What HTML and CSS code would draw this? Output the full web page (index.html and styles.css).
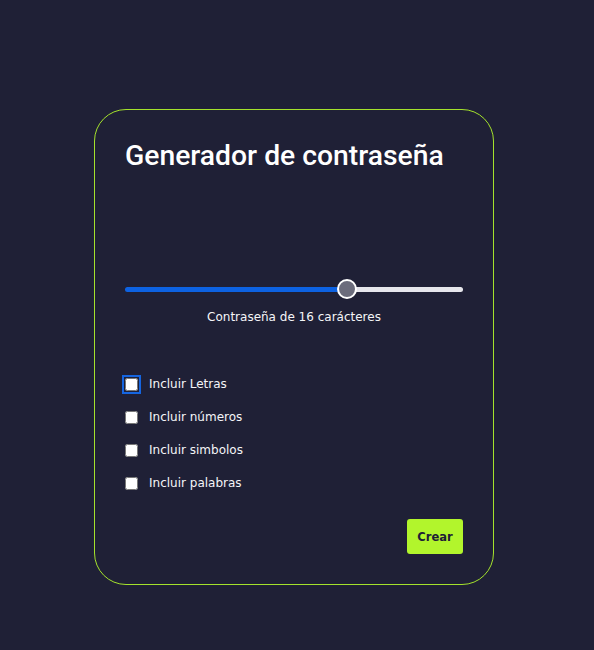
FILE: index.html
```html
<!DOCTYPE html>
<html lang="es">
<head>
<meta charset="utf-8">
<title>Generador de contraseña</title>
<link rel="stylesheet" href="styles.css">
</head>
<body>
<main class="page">
  <section class="card">
    <h1 class="title">Generador de contraseña</h1>
    <input class="slider" type="range" min="8" max="20" value="16">
    <p class="length">Contraseña de 16 carácteres</p>
    <div class="options">
      <label class="option"><input type="checkbox" class="check focused"><span>Incluir Letras</span></label>
      <label class="option"><input type="checkbox" class="check"><span>Incluir números</span></label>
      <label class="option"><input type="checkbox" class="check"><span>Incluir simbolos</span></label>
      <label class="option"><input type="checkbox" class="check"><span>Incluir palabras</span></label>
    </div>
    <div class="actions">
      <button class="create" type="button">Crear</button>
    </div>
  </section>
</main>
</body>
</html>
```
FILE: styles.css
```css
* { box-sizing: border-box; }
html, body {
  margin: 0;
  background: #1f2036;
  height: 100%;
}
body {
  font-family: "DejaVu Sans", sans-serif;
  color: #f5f5f8;
}
.page {
  display: flex;
  justify-content: flex-start;
  padding: 109px 0 0 94px;
}
.card {
  width: 400px;
  height: 476px;
  flex-shrink: 0;
  border: 1px solid #a4e22c;
  border-radius: 32px;
  padding: 30px;
  display: flex;
  flex-direction: column;
}
.title {
  margin: 0;
  font-family: Roboto, "Liberation Sans", sans-serif;
  font-size: 28.3px;
  line-height: 32px;
  font-weight: 500;
  white-space: nowrap;
  color: #ffffff;
  flex-shrink: 0;
}
.slider {
  -webkit-appearance: none;
  appearance: none;
  margin: 107px 0 0 0;
  width: 100%;
  height: 20px;
  background: transparent;
  flex-shrink: 0;
}
.slider::-webkit-slider-runnable-track {
  height: 5px;
  border-radius: 3px;
  background: linear-gradient(to right, #0d62e2 0, #0d62e2 65.7%, #e6e6ec 65.7%, #e6e6ec 100%);
}
.slider::-webkit-slider-thumb {
  -webkit-appearance: none;
  appearance: none;
  width: 20px;
  height: 20px;
  margin-top: -7.5px;
  border-radius: 50%;
  background: #6b6c7c;
  border: 2px solid #ffffff;
}
.length {
  margin: 10px 0 0 0;
  text-align: center;
  font-size: 12px;
  line-height: 16px;
  flex-shrink: 0;
}
.options {
  margin-top: 49px;
  display: flex;
  flex-direction: column;
  gap: 13px;
  flex-shrink: 0;
}
.option {
  display: flex;
  align-items: center;
  height: 20px;
  font-size: 12px;
  gap: 11px;
}
.check {
  margin: 0;
  width: 13px;
  height: 13px;
}
.check.focused {
  outline: 2px solid #1565e0;
  outline-offset: 1px;
  border-radius: 2px;
}
.actions {
  margin-top: auto;
  display: flex;
  justify-content: flex-end;
}
.create {
  width: 56px;
  height: 35px;
  border: none;
  border-radius: 3px;
  background: #b2f52c;
  color: #1f2036;
  font-family: "DejaVu Sans", sans-serif;
  font-weight: bold;
  font-size: 11.5px;
  padding: 0;
}
```
